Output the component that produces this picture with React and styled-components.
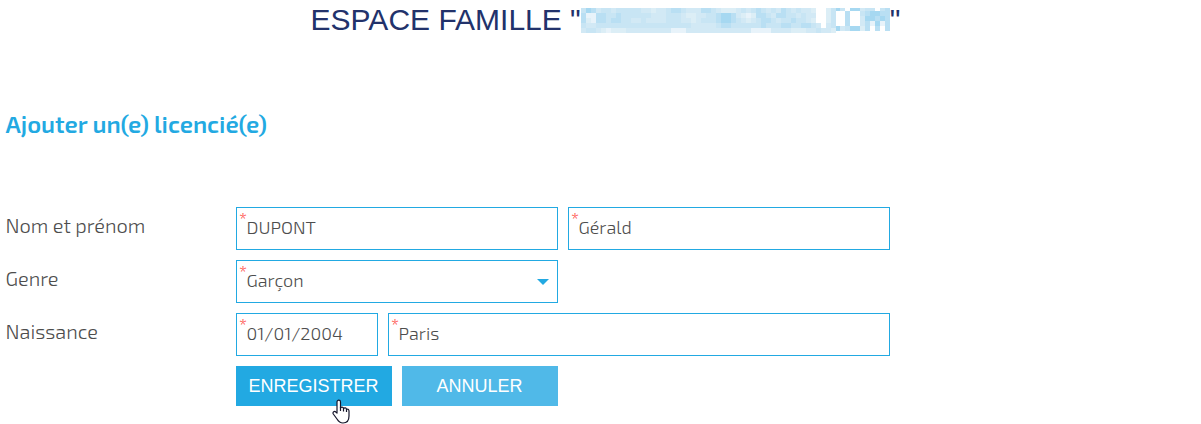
import React from "react";
import styled, { createGlobalStyle } from "styled-components";

const Global = createGlobalStyle`
  * {
    box-sizing: border-box;
  }
  body {
    margin: 0;
    background: #fff;
  }
`;

// 5px blocks that hide the account address, one letter per tone
const TONES = {
  a: "#a6d8f1",
  b: "#b9dff3",
  c: "#c8e5f4",
  d: "#d2e9f5",
  e: "#dceef6",
  f: "#e8f3fa",
};

const ADDRESS = [
  "cabdccdcccccddeddcbbcdddbbcdeeedcdcbcdcdbcdcdde..ec",
  "bffbbccbccccccdddcccdeeddccbaabdefebbcdbbccdcdd..ec",
  "befbbcbbccddcddddcccddedcccbaabcdedcbbcdccbccde..ec",
  "cddcccccccccccccccccccdddddcbbccccccbcccbbccbbcd.dc",
  "dccdefeeedddddddddfffdddddddddddddffffddddeeeddcdde",
];

const DOMAIN = [
  "ac.aadcc.cb",
  "..b..cbaabb",
  "..b..daabab",
  "..b..dbfafb",
  "adcaaeb.b.b",
];

const Page = styled.main`
  width: 1201px;
  height: 424px;
  overflow: hidden;
  font-family: "Exo 2", Roboto, sans-serif;
  color: #4d4d4d;
`;
const Title = styled.h1`
  display: flex;
  justify-content: center;
  align-items: flex-start;
  height: 107px;
  margin: 0;
  padding: 2px 0 0 10px;
  color: #22326b;
  font: 400 30px/35px "Liberation Sans", sans-serif;
  white-space: pre;
`;
const Mosaic = styled.svg`
  display: block;
  margin-top: 6px;
`;
const Subtitle = styled.h2`
  height: 100px;
  margin: 0;
  padding-left: 5.5px;
  color: #22a9e2;
  font-size: 24px;
  font-weight: 600;
  line-height: 34px;
  letter-spacing: -0.03px;
`;
const Form = styled.form`
  display: flex;
  flex-direction: column;
  gap: 10px;
  width: 890px;
`;
const Row = styled.div`
  display: flex;
  gap: 10px;
`;
const Label = styled.label`
  width: 226px;
  padding-left: 5.5px;
  font-size: 20px;
  font-weight: 300;
  line-height: 37px;
`;
const Field = styled.div`
  display: flex;
  align-items: flex-start;
  position: relative;
  width: ${(props) => props.$width || "322px"};
  height: 43px;
  padding: 0 8px 0 9.5px;
  border: 1px solid #22a9e2;
  font-size: 18px;
  font-weight: 300;
  line-height: 38px;
`;
const Required = styled.span`
  position: absolute;
  top: 0;
  left: 2px;
  color: #ff4a44;
  font-size: 18px;
  font-weight: 400;
  line-height: 20px;
`;
const Caret = styled.span`
  margin: 18px 0 0 auto;
  border: 6px solid transparent;
  border-top-color: #22a9e2;
  border-bottom: 0;
`;
const Actions = styled(Row)`
  padding-left: 236px;
`;
const Button = styled.button`
  position: relative;
  width: 156px;
  height: 40px;
  padding: 0 1px 0 0;
  border: 0;
  background: ${(props) => (props.$light ? "#50b9e8" : "#22a9e2")};
  color: #fff;
  font: 400 18px/40px "Liberation Sans", sans-serif;
`;
const Pointer = styled.svg`
  position: absolute;
  top: 33px;
  left: 96px;
`;

function Blocks({ rows, x, y }) {
  return rows.map((row, r) =>
    [...row].map((tone, c) =>
      TONES[tone] ? (
        <rect
          key={`${r}-${c}`}
          x={x + c * 5}
          y={y + r * 5}
          width="5"
          height="5"
          fill={TONES[tone]}
        />
      ) : null
    )
  );
}

function Input({ value, select, width }) {
  return (
    <Field $width={width}>
      <Required>*</Required>
      {value}
      {select && <Caret />}
    </Field>
  );
}

export default function App() {
  return (
    <Page>
      <Global />
      <Title>
        <span>ESPACE FAMILLE "</span>
        <Mosaic width="309" height="25" shapeRendering="crispEdges">
          <Blocks rows={DOMAIN} x={254} y={-2} />
          <Blocks rows={ADDRESS} x={0} y={0} />
        </Mosaic>
        <span>"</span>
      </Title>
      <Subtitle>Ajouter un(e) licencié(e)</Subtitle>
      <Form>
        <Row>
          <Label>Nom et prénom</Label>
          <Input value="DUPONT" />
          <Input value="Gérald" />
        </Row>
        <Row>
          <Label>Genre</Label>
          <Input value="Garçon" select />
        </Row>
        <Row>
          <Label>Naissance</Label>
          <Input value="01/01/2004" width="142px" />
          <Input value="Paris" width="502px" />
        </Row>
        <Actions>
          <Button type="button">
            ENREGISTRER
            <Pointer width="18" height="25" viewBox="0 0 18 25">
              <path
                d="M5 14V3C5 .5 8.500 .5 8.500 3V9C9 7.500 11.500 7.800 11.500 9.500C12.500 8.300 14.500 8.700 14.500 10.500C15.500 9.500 17 10.300 17 12V17C17 21.500 14.500 24 11 24C8 24 6.500 22.500 5 20L1.300 15C.3 13 2.500 11.800 3.800 13Z"
                fill="#fff"
                stroke="#15152a"
                strokeWidth="1.200"
                strokeLinejoin="round"
              />
              <path
                d="M8.500 8V12M11.500 9.500V12.500M14.500 10.500V13"
                fill="none"
                stroke="#15152a"
                strokeWidth="1.200"
              />
            </Pointer>
          </Button>
          <Button type="button" $light>
            ANNULER
          </Button>
        </Actions>
      </Form>
    </Page>
  );
}
